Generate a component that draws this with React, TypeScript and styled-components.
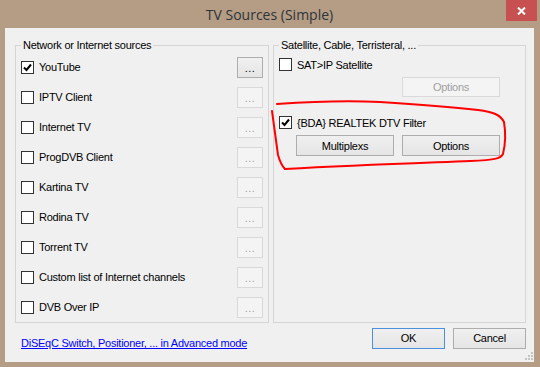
import React from "react";
import styled, { createGlobalStyle } from "styled-components";

const GlobalStyle = createGlobalStyle`
  html, body {
    margin: 0;
    padding: 0;
    background: #b49c85;
  }
  body {
    font-family: "Liberation Sans", Arial, sans-serif;
    font-size: 11px;
    letter-spacing: -0.25px;
    color: #000;
  }
`;

const Window = styled.div`
  position: relative;
  width: 540px;
  height: 367px;
  box-sizing: border-box;
  background: #b49c85;
  padding: 0 6px 5px 5px;
  display: flex;
  flex-direction: column;
`;

const TitleBar = styled.div`
  height: 28px;
  display: grid;
  grid-template-columns: 1fr auto 1fr;
  align-items: start;
`;

const Title = styled.div`
  grid-column: 2;
  font-family: "Open Sans", "Noto Sans", sans-serif;
  font-size: 14px;
  letter-spacing: 0;
  line-height: 30px;
  color: #2d3539;
`;

const CloseButton = styled.div`
  grid-column: 3;
  justify-self: end;
  margin-right: -3px;
  width: 31px;
  height: 21px;
  background: #c75050;
  display: flex;
  align-items: center;
  justify-content: center;
`;

const Client = styled.div`
  flex: 1;
  background: #f0f0f0;
  padding: 11px 8px 0 10px;
  display: flex;
  flex-direction: column;
`;

const Groups = styled.div`
  display: grid;
  grid-template-columns: 254px 253px;
  gap: 4px;
  height: 282px;
`;

const GroupBox = styled.fieldset`
  margin: 0;
  padding: 0 5px;
  border: 1px solid #d5d5d5;
  min-width: 0;
  display: flex;
  flex-direction: column;
  legend {
    padding: 0 2px;
    margin-left: 0;
    line-height: 13px;
    font-size: 11px;
    color: #000;
  }
`;

const SourceRow = styled.div`
  height: 30px;
  display: flex;
  align-items: center;
  justify-content: space-between;
`;

const CheckLabel = styled.label<{ $top?: number }>`
  display: flex;
  align-items: center;
  gap: 5px;
  margin-top: ${(p) => p.$top ?? 0}px;
  white-space: nowrap;
`;

const Box = styled.span`
  width: 13px;
  height: 13px;
  box-sizing: border-box;
  border: 1px solid #333;
  background: #fff;
  display: flex;
  align-items: center;
  justify-content: center;
`;

const Button = styled.div<{ $disabled?: boolean; $default?: boolean; $w: number; $h?: number }>`
  box-sizing: border-box;
  width: ${(p) => p.$w}px;
  height: ${(p) => p.$h ?? 21}px;
  display: flex;
  align-items: center;
  justify-content: center;
  border: 1px solid
    ${(p) => (p.$disabled ? "#d9d9d9" : p.$default ? "#4a90dc" : "#adadad")};
  background: ${(p) =>
    p.$disabled ? "#f4f4f4" : "linear-gradient(#f0f0f0, #e5e5e5)"};
  color: ${(p) => (p.$disabled ? "#a0a0a0" : "#000")};
  font-size: 11px;
`;

const Dots = styled.span`
  margin-top: 2px;
  letter-spacing: 0.5px;
`;

const ButtonGrid = styled.div<{ $top: number }>`
  display: grid;
  grid-template-columns: 98px 98px;
  gap: 8px;
  margin: ${(p) => p.$top}px 0 0 17px;
`;

const Footer = styled.div`
  margin-top: 6px;
  display: flex;
  align-items: center;
  gap: 8px;
  padding-left: 6px;
`;

const AdvancedLink = styled.a`
  color: #0000ff;
  text-decoration: underline;
  margin-top: 10px;
  flex: 1;
`;

const Grip = styled.svg`
  position: absolute;
  right: 6px;
  bottom: 6px;
`;

const Annotation = styled.svg`
  position: absolute;
  left: 0;
  top: 0;
  pointer-events: none;
`;

const Check = () => (
  <svg width="9" height="9" viewBox="0 0 9 9">
    <path d="M1 4.5 L3.5 7 L8 1.5" fill="none" stroke="#000" strokeWidth="2" />
  </svg>
);

const CheckBox = ({ checked, label, top }: { checked?: boolean; label: string; top?: number }) => (
  <CheckLabel $top={top}>
    <Box>{checked && <Check />}</Box>
    {label}
  </CheckLabel>
);

const sources = [
  { name: "YouTube", on: true },
  { name: "IPTV Client" },
  { name: "Internet TV" },
  { name: "ProgDVB Client" },
  { name: "Kartina TV" },
  { name: "Rodina TV" },
  { name: "Torrent TV" },
  { name: "Custom list of Internet channels" },
  { name: "DVB Over IP" },
];

const App = () => (
  <>
    <GlobalStyle />
    <Window>
      <TitleBar>
        <Title>TV Sources (Simple)</Title>
        <CloseButton>
          <svg width="9" height="8" viewBox="0 0 9 8">
            <path d="M1 0.5 L8 7.5 M8 0.5 L1 7.5" stroke="#fff" strokeWidth="2" />
          </svg>
        </CloseButton>
      </TitleBar>
      <Client>
        <Groups>
          <GroupBox>
            <legend>Network or Internet sources</legend>
            {sources.map((s) => (
              <SourceRow key={s.name}>
                <CheckBox checked={s.on} label={s.name} />
                <Button $w={26} $disabled={!s.on}>
                  <Dots>...</Dots>
                </Button>
              </SourceRow>
            ))}
          </GroupBox>
          <GroupBox>
            <legend>Satellite, Cable, Terristeral, ...</legend>
            <CheckBox label="SAT>IP Satellite" top={6} />
            <ButtonGrid $top={6}>
              <span />
              <Button $w={98} $h={20} $disabled>
                Options
              </Button>
            </ButtonGrid>
            <CheckBox checked label="{BDA} REALTEK DTV Filter" top={19} />
            <ButtonGrid $top={6}>
              <Button $w={98}>Multiplexs</Button>
              <Button $w={98}>Options</Button>
            </ButtonGrid>
          </GroupBox>
        </Groups>
        <Footer>
          <AdvancedLink href="#">DiSEqC Switch, Positioner, ... in Advanced mode</AdvancedLink>
          <Button $w={73} $default>
            OK
          </Button>
          <Button $w={73}>Cancel</Button>
        </Footer>
      </Client>
      <Grip width="9" height="9" viewBox="0 0 9 9">
        <g fill="#c4c4c4">
          <rect x="6" y="0" width="2" height="2" />
          <rect x="3" y="3" width="2" height="2" />
          <rect x="6" y="3" width="2" height="2" />
          <rect x="0" y="6" width="2" height="2" />
          <rect x="3" y="6" width="2" height="2" />
          <rect x="6" y="6" width="2" height="2" />
        </g>
      </Grip>
      <Annotation width="540" height="367" viewBox="0 0 540 367">
        <path
          d="M277 104 C 320 101, 360 101, 380 102 C 410 104, 450 107, 478 110 C 492 112, 500 114, 504 122 C 506 134, 505 146, 503 154 C 501 158, 497 160, 470 161 C 420 163, 360 165, 285 169"
          fill="none"
          stroke="#f00"
          strokeWidth="2"
          strokeLinecap="round"
        />
        <path
          d="M272 111 C 274 125, 276 140, 278 155 C 280 162, 282 166, 285 169"
          fill="none"
          stroke="#f00"
          strokeWidth="2"
          strokeLinecap="round"
        />
      </Annotation>
    </Window>
  </>
);

export default App;
